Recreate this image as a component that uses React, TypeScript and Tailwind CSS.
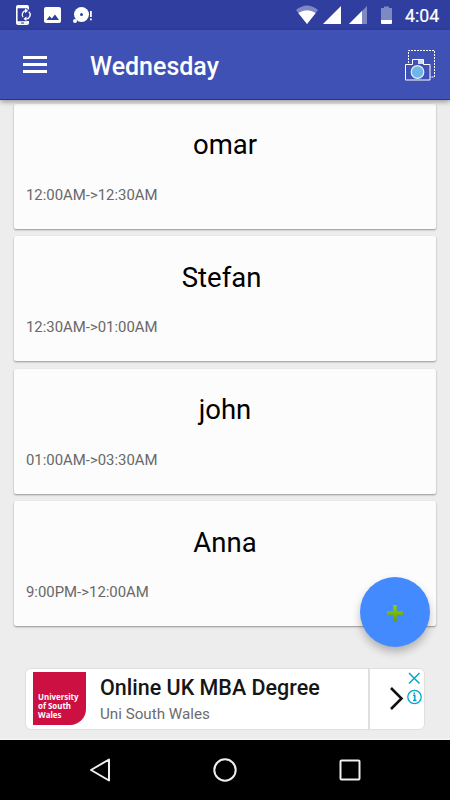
import React from 'react';

const CLASSES = [
  { name: 'omar', time: '12:00AM->12:30AM' },
  { name: 'Stefan ', time: '12:30AM->01:00AM' },
  { name: 'john', time: '01:00AM->03:30AM' },
  { name: 'Anna', time: '9:00PM->12:00AM' },
];

const StatusBar: React.FC = () => (
  <div className="flex h-[30px] items-center justify-between bg-[#303f9f] pl-[15px] pr-[10px] text-white">
    <div className="flex items-center">
      {/* Phone sync */}
      <svg width="18" height="22" viewBox="0 0 18 22" fill="none">
        <path d="M13.200 5.500V3Q13.200 1.800 12 1.800H3Q1.800 1.800 1.800 3V19Q1.800 20.200 3 20.200H12Q13.200 20.200 13.200 19V17" stroke="currentColor" strokeWidth="1.600" />
        <path d="M2 3h11M2 18.500h11" stroke="currentColor" strokeWidth="2.600" />
        <path d="M6 19h3" stroke="#303f9f" />
        <path d="M8 13a4 4 0 0 1 2.500-6.300M13.800 7.800a4 4 0 0 1-2.300 7" stroke="currentColor" strokeWidth="1.300" />
        <path d="M10 4.300l3 2.500-3 2.400zM11.500 12.400l-3 2.400 3 2.500z" fill="currentColor" />
      </svg>
      {/* Picture */}
      <svg className="ml-[11px]" width="17" height="18" viewBox="0 0 17 18">
        <rect y="1" width="17" height="16" rx="2" fill="currentColor" />
        <path d="M2.500 14l3-4 2.300 2.500L11 8.500l4 5.500z" fill="#303f9f" />
      </svg>
      {/* Disc alert */}
      <svg className="ml-[12px]" width="21" height="20" viewBox="0 0 21 20" fill="currentColor">
        <circle cx="8.500" cy="9.500" r="7.500" />
        <circle cx="8.500" cy="9.500" r="1.500" fill="#303f9f" />
        <circle cx="2" cy="16" r="2" />
        <path d="M17 6h1.800v6H17zM17 13.500h1.800v1.800H17z" />
      </svg>
    </div>
    <div className="flex items-center">
      <svg width="98" height="20" viewBox="0 0 98 20" fill="currentColor">
        <path d="M0 5Q11 -4 22 5L11 19z" opacity=".38" />
        <path d="M2.300 8Q11 2.500 19.700 8L11 19z" />
        <path d="M45 1v18H27z" />
        <path d="M71 1v18H53z" opacity=".38" />
        <path d="M66 6v13H53z" />
        <path d="M88 1.500h5V3h3v13H85V3h3z" opacity=".38" />
        <path d="M85 15h11v3q0 1-1 1h-9q-1 0-1-1z" />
      </svg>
      <span className="ml-[11px] mt-px w-[35px] whitespace-nowrap text-[17.700px] leading-[30px] [-webkit-text-stroke:0.2px_white]">4:04</span>
    </div>
  </div>
);

const Toolbar: React.FC = () => (
  <header className="relative z-10 flex h-[70px] items-center border-b border-[#1537aa] bg-[#3f51b5] pl-[23px] pr-[15px] text-white shadow-[0_2px_5px_rgba(0,0,0,0.35)]">
    <div className="flex w-6 flex-col gap-[4px]">
      <span className="h-[3px] bg-white" />
      <span className="h-[3px] bg-white" />
      <span className="h-[3px] bg-white" />
    </div>
    <h1 className="ml-[43px] mt-[3px] text-[25px] font-medium leading-none">Wednesday</h1>
    {/* Camera over a dashed selection */}
    <svg className="ml-auto" width="32" height="32" viewBox="0 0 32 32" fill="none">
      <path d="M5.500 14V1.500H31.500V28H27" stroke="white" strokeDasharray="2 1" />
      <path d="M2.500 15.500H9.500V10.500H20.500V15.500H27V31H2.500z" fill="#3f51b5" stroke="white" />
      <rect x="15" y="11" width="5" height="4" fill="#d5daf0" />
      <circle cx="14.500" cy="23" r="6.300" fill="#6eb5e8" stroke="#e6eef5" strokeWidth="1.200" />
    </svg>
  </header>
);

const AdBanner: React.FC = () => (
  <div className="mx-auto mt-[42px] flex h-[62px] w-[400px] overflow-hidden rounded-[6px] border border-[#dfdfdf] bg-white">
    <div className="ml-[7px] mt-[3px] h-[53px] w-[53px] shrink-0 rounded-br-[16px] bg-[#cc1041] pl-[5px] pt-[21px] font-['Open_Sans',sans-serif] text-[7.900px] font-bold leading-[9px] text-white">
      University
      <br />
      of South
      <br />
      Wales
    </div>
    <div className="ml-[14px] flex-1 whitespace-nowrap">
      <p className="mt-[6px] text-[21.500px] font-medium leading-[26px] text-[#161616]">Online UK MBA Degree</p>
      <p className="mt-[4px] text-[15.200px] leading-[18px] text-[#6c6c6c]">Uni South Wales</p>
    </div>
    <div className="flex w-[56px] border-l-2 border-[#dfdfdf]">
      <svg width="54" height="60" viewBox="0 0 54 60" fill="none">
        <path d="M21 19l10.500 10.500L21 40" stroke="#111" strokeWidth="2.600" />
        <g stroke="#00a7cb" strokeWidth="1.500">
          <path d="M39 4l10.500 10.500M49.500 4L39 14.500" />
          <circle cx="44.500" cy="28" r="6.700" strokeWidth="1.300" />
          <path d="M43 26.500h1.800v5M43 31.500h3.500M44.300 23.500v1.700" />
        </g>
      </svg>
    </div>
  </div>
);

const NavigationBar: React.FC = () => (
  <nav className="flex h-[60px] items-center justify-between bg-black px-[88px] text-[#eee]">
    <svg width="24" height="26" viewBox="0 0 24 26" fill="none" stroke="currentColor" strokeWidth="2" strokeLinejoin="round">
      <path d="M21 2.500v21L3 13z" />
    </svg>
    <svg width="26" height="26" viewBox="0 0 26 26" fill="none" stroke="currentColor" strokeWidth="2">
      <circle cx="13" cy="13" r="10.700" />
    </svg>
    <svg width="24" height="26" viewBox="0 0 24 26" fill="none" stroke="currentColor" strokeWidth="2">
      <rect x="2.500" y="3.500" width="19" height="19" rx="1" />
    </svg>
  </nav>
);

const App: React.FC = () => {
  return (
    <div className="relative flex h-[800px] w-[450px] flex-col overflow-hidden bg-[#ededed] font-[Roboto,sans-serif]">
      <StatusBar />
      <Toolbar />
      <main className="flex-1 border-b border-[#f8f8f8] pt-[3.500px]">
        <div className="flex flex-col gap-[7.500px] px-[14px]">
          {CLASSES.map((item) => (
            <div key={item.time} className="h-[125px] rounded-[2px] bg-[#fcfcfc] pt-[24.600px] shadow-[0_1px_2px_rgba(0,0,0,0.38)]">
              <h2 className="whitespace-pre text-center text-[27.500px] leading-[34px] text-black">{item.name}</h2>
              <p className="ml-[12px] mt-[23.900px] text-[14.900px] leading-[18px] text-[#686868]">{item.time}</p>
            </div>
          ))}
        </div>
        <AdBanner />
      </main>
      <NavigationBar />

      {/* Floating add button */}
      <button className="absolute left-[360px] top-[577px] z-20 flex h-[70px] w-[70px] items-center justify-center rounded-full bg-[#448aff] pt-px shadow-[0_5px_9px_rgba(0,0,0,0.25)]">
        <svg width="16" height="16" viewBox="0 0 16 16">
          <defs>
            <linearGradient id="plus" x1="0" y1="0" x2="0" y2="1">
              <stop offset="0" stopColor="#8bd600" />
              <stop offset="1" stopColor="#659f00" />
            </linearGradient>
          </defs>
          <path d="M6.300 0h3.400v6.300H16v3.400H9.700V16H6.300V9.700H0V6.300h6.300z" fill="url(#plus)" />
        </svg>
      </button>
    </div>
  );
};

export default App;
